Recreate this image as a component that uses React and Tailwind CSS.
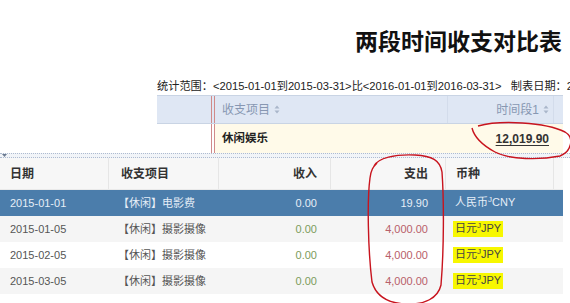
import React from 'react'

const font = { fontFamily: '"Liberation Sans", "Noto Sans CJK SC", sans-serif' }

function SortIcon({ color = '#a9b6ca' }) {
  return (
    <svg width="6" height="9" viewBox="0 0 6 9" className="inline-block ml-[4px]">
      <path d="M3 0.5 L5.5 3.5 L0.5 3.5 Z" fill={color} />
      <path d="M3 8.5 L5.5 5.5 L0.5 5.5 Z" fill={color} />
    </svg>
  )
}

const rows = [
  { date: '2015-01-01', item: '【休闲】电影费', inc: '0.00', exp: '19.90', cur: '人民币', code: 'CNY', sel: true },
  { date: '2015-01-05', item: '【休闲】摄影摄像', inc: '0.00', exp: '4,000.00', cur: '日元', code: 'JPY', bg: 'bg-[#f5f5f5]' },
  { date: '2015-02-05', item: '【休闲】摄影摄像', inc: '0.00', exp: '4,000.00', cur: '日元', code: 'JPY', bg: 'bg-white' },
  { date: '2015-03-05', item: '【休闲】摄影摄像', inc: '0.00', exp: '4,000.00', cur: '日元', code: 'JPY', bg: 'bg-[#f5f5f5]' },
]

export default function App() {
  return (
    <div className="relative w-[570px] h-[303px] overflow-hidden bg-white text-[#333]" style={font}>
      {/* title */}
      <div className="h-[77px] pl-[355px] pt-[28px]">
        <h1 className="text-[23px] leading-[28px] font-bold text-[#111] whitespace-nowrap">两段时间收支对比表</h1>
      </div>

      <div className="h-[18px] pl-[157px] text-[11.2px] leading-[18px] whitespace-nowrap text-[#222]">
        统计范围：&lt;2015-01-01到2015-03-31&gt;比&lt;2016-01-01到2016-03-31&gt;&nbsp;&nbsp;&nbsp;制表日期：2016-04-01
      </div>

      {/* summary table */}
      <div className="ml-[157px] w-[406px]">
        <div className="flex h-[29px] bg-[#dfe7f4] border-t border-b border-[#c9d4e4] text-[12px] text-[#8797b2]">
          <div className="w-[54px]" />
          <div className="w-[4px] border-l border-r border-[#d08a8a]" />
          <div className="w-[232px] flex items-center pl-[7px]">收支项目<SortIcon /></div>
          <div className="w-[106px] flex items-center justify-end pr-[4px] border-l border-[#d3dceb]">时间段1<SortIcon /></div>
          <div className="flex-1 border-l border-[#d3dceb]" />
        </div>
        <div className="flex h-[29px] text-[11px]">
          <div className="w-[54px] bg-white" />
          <div className="w-[4px] border-l border-r border-[#d08a8a]" />
          <div className="flex-1 flex items-center bg-[#fffae9] pl-[7px] font-bold text-[#222] text-[11.5px]">休闲娱乐</div>
          <div className="w-[116px] flex items-center justify-end pr-[14px] bg-[#fffae9] font-bold text-[#333] text-[12px]">
            <span className="underline underline-offset-2">12,019.90</span>
          </div>
        </div>
      </div>

      {/* splitter */}
      <div className="relative h-[5px] border-t border-b border-dotted border-[#aebbd0] bg-[#f1f4f8]">
        <svg width="5" height="4" viewBox="0 0 5 4" className="absolute left-[2px] top-0">
          <path d="M0 0 L5 0 L2.5 3 Z" fill="#6b7a90" />
        </svg>
      </div>

      {/* detail table */}
      <div className="w-[563px]">
        <div className="flex h-[32px] bg-[#f7f7f7] border-b border-[#eaeaea] text-[12px] font-bold text-[#333]">
          <div className="w-[108px] flex items-center pl-[10px]">日期</div>
          <div className="w-[110px] flex items-center pl-[12px] border-l border-[#e6e6e6]">收支项目</div>
          <div className="w-[112px] flex items-center justify-end pr-[13px] border-l border-[#e6e6e6]">收入</div>
          <div className="w-[115px] flex items-center justify-end pr-[17px] border-l border-[#e6e6e6]">支出</div>
          <div className="w-[108px] flex items-center pl-[10px] border-l border-[#e6e6e6]">币种</div>
          <div className="flex-1 border-l border-[#e6e6e6]" />
        </div>
        {rows.map((r) => (
          <div
            key={r.date}
            className={'flex h-[26px] text-[11px] ' + (r.sel ? 'bg-[#4b7dab] text-[#e6eef7]' : r.bg + ' text-[#555]')}
          >
            <div className="w-[108px] flex items-center pl-[10px]">{r.date}</div>
            <div className="w-[110px] flex items-center pl-[10px]">{r.item}</div>
            <div className={'w-[112px] flex items-center justify-end pr-[13px] ' + (r.sel ? '' : 'text-[#7c9c5c]')}>{r.inc}</div>
            <div className={'w-[115px] flex items-center justify-end pr-[17px] ' + (r.sel ? '' : 'text-[#b8606a]')}>{r.exp}</div>
            <div className="w-[108px] flex items-center pl-[8px]">
              <span className={'px-[2px] leading-[15px] ' + (r.sel ? '' : 'bg-[#f7f700] text-[#444]')}>
                {r.cur}
                <span className="text-[8px] relative -top-[4px]">J</span>
                {r.code}
              </span>
            </div>
            <div className="flex-1" />
          </div>
        ))}
      </div>

      {/* hand drawn marks */}
      <svg className="absolute left-0 top-0 pointer-events-none" width="570" height="303" viewBox="0 0 570 303">
        <path
          d="M478 126 C500 120, 545 122, 565 132 C575 138, 571 152, 560 156 C540 160, 510 160, 495 152 C482 145, 474 136, 472 128"
          fill="none"
          stroke="#c8141e"
          strokeWidth="1.4"
        />
        <path
          d="M374 166 C378 158, 395 154, 415 155 C432 156, 440 160, 442 172 C444 200, 444 250, 441 285 C438 298, 425 305, 405 304 C388 303, 376 296, 372 282 C368 250, 367 200, 370 178 C371 170, 373 167, 377 163"
          fill="none"
          stroke="#c8141e"
          strokeWidth="1.4"
        />
      </svg>
    </div>
  )
}
